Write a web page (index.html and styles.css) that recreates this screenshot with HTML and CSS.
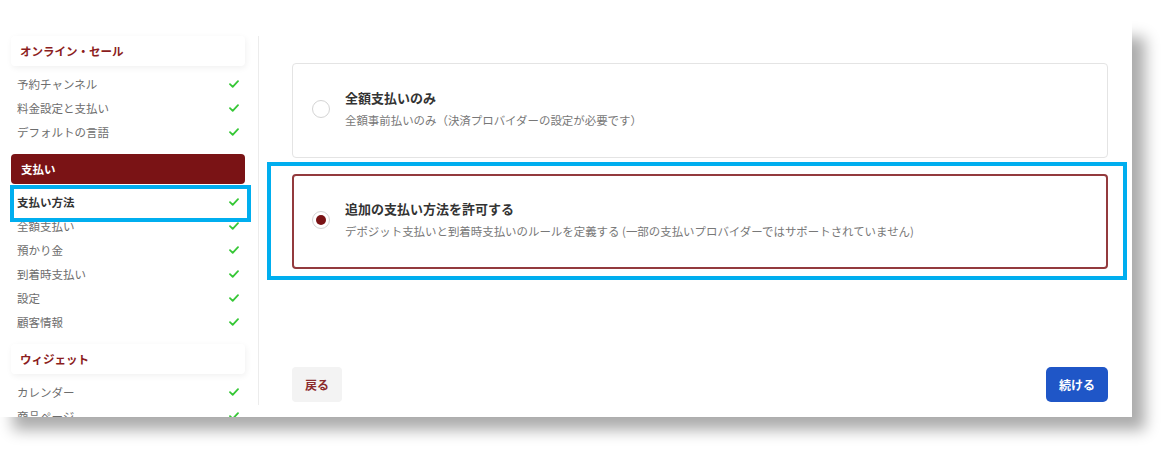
FILE: index.html
```html
<!DOCTYPE html>
<html lang="ja">
<head>
<meta charset="utf-8">
<title>支払い方法</title>
<link rel="stylesheet" href="styles.css">
</head>
<body>
<div class="frame">
  <div class="shadow"></div>
  <div class="shot">
    <aside class="sidebar">
      <div class="group">
        <div class="group-head">オンライン・セール</div>
        <div class="item"><span>予約チャンネル</span><svg class="check" viewBox="0 0 10 8"><path d="M1 4.2 3.7 6.8 9 1.2"/></svg></div>
        <div class="item"><span>料金設定と支払い</span><svg class="check" viewBox="0 0 10 8"><path d="M1 4.2 3.7 6.8 9 1.2"/></svg></div>
        <div class="item"><span>デフォルトの言語</span><svg class="check" viewBox="0 0 10 8"><path d="M1 4.2 3.7 6.8 9 1.2"/></svg></div>
      </div>
      <div class="group">
        <div class="group-head active">支払い</div>
        <div class="item current"><span>支払い方法</span><svg class="check" viewBox="0 0 10 8"><path d="M1 4.2 3.7 6.8 9 1.2"/></svg></div>
        <div class="item"><span>全額支払い</span><svg class="check" viewBox="0 0 10 8"><path d="M1 4.2 3.7 6.8 9 1.2"/></svg></div>
        <div class="item"><span>預かり金</span><svg class="check" viewBox="0 0 10 8"><path d="M1 4.2 3.7 6.8 9 1.2"/></svg></div>
        <div class="item"><span>到着時支払い</span><svg class="check" viewBox="0 0 10 8"><path d="M1 4.2 3.7 6.8 9 1.2"/></svg></div>
        <div class="item"><span>設定</span><svg class="check" viewBox="0 0 10 8"><path d="M1 4.2 3.7 6.8 9 1.2"/></svg></div>
        <div class="item"><span>顧客情報</span><svg class="check" viewBox="0 0 10 8"><path d="M1 4.2 3.7 6.8 9 1.2"/></svg></div>
      </div>
      <div class="group">
        <div class="group-head">ウィジェット</div>
        <div class="item"><span>カレンダー</span><svg class="check" viewBox="0 0 10 8"><path d="M1 4.2 3.7 6.8 9 1.2"/></svg></div>
        <div class="item"><span>商品ページ</span><svg class="check" viewBox="0 0 10 8"><path d="M1 4.2 3.7 6.8 9 1.2"/></svg></div>
      </div>
    </aside>
    <main class="main">
      <div class="options">
        <label class="option">
          <span class="radio"></span>
          <span class="option-text">
            <span class="option-title">全額支払いのみ</span>
            <span class="option-desc">全額事前払いのみ（決済プロバイダーの設定が必要です）</span>
          </span>
        </label>
        <label class="option selected">
          <span class="radio"></span>
          <span class="option-text">
            <span class="option-title">追加の支払い方法を許可する</span>
            <span class="option-desc">デポジット支払いと到着時支払いのルールを定義する (一部の支払いプロバイダーではサポートされていません)</span>
          </span>
        </label>
      </div>
      <div class="actions">
        <button class="btn btn-back">戻る</button>
        <button class="btn btn-next">続ける</button>
      </div>
    </main>
    <div class="mark mark-side"></div>
    <div class="mark mark-main"></div>
  </div>
</div>
</body>
</html>
```

FILE: styles.css
```css
* { box-sizing: border-box; }
html, body {
  margin: 0;
  padding: 0;
  background: #ffffff;
}
body {
  font-family: "Noto Sans CJK JP", "Noto Sans", sans-serif;
  width: 1168px;
  height: 472px;
  overflow: hidden;
}
.frame {
  position: relative;
  width: 1132px;
  height: 417px;
}
.shadow {
  position: absolute;
  top: 24px;
  left: 0;
  width: 1132px;
  height: 393px;
  box-shadow: 13px 13px 14px rgba(0, 0, 0, 0.33);
}
.shot {
  position: relative;
  display: flex;
  width: 1132px;
  height: 417px;
  background: #ffffff;
  overflow: hidden;
}

/* sidebar */
.sidebar {
  width: 259px;
  height: 369px;
  margin-top: 36px;
  border-right: 1px solid #ececec;
  display: flex;
  flex-direction: column;
  flex-shrink: 0;
}
.group + .group { margin-top: 10px; }
.group-head {
  height: 30px;
  margin: 0 13px 6px 11px;
  padding-left: 9px;
  display: flex;
  align-items: center;
  font-size: 11.5px;
  font-weight: 700;
  color: #8b1c20;
  background: #ffffff;
  border-radius: 4px;
  box-shadow: 1px 2px 6px rgba(0, 0, 0, 0.06);
}
.group-head.active {
  background: #7a1315;
  color: #ffffff;
  padding-left: 10px;
  box-shadow: none;
}
.item {
  height: 24px;
  display: flex;
  align-items: center;
  justify-content: space-between;
  padding: 0 19px 0 17px;
  font-size: 11.5px;
  color: #6d6d6d;
}
.item.current {
  font-weight: 700;
  color: #333333;
}
.check {
  width: 10px;
  height: 8px;
}
.check path {
  fill: none;
  stroke: #36c736;
  stroke-width: 1.8;
  stroke-linecap: round;
  stroke-linejoin: round;
}

/* main */
.main {
  flex: 1;
  display: flex;
  flex-direction: column;
  padding: 63px 24px 15px 33px;
}
.options {
  display: flex;
  flex-direction: column;
  gap: 16px;
}
.option {
  height: 95px;
  display: flex;
  align-items: center;
  padding: 0 19px 4px 19px;
  border: 1px solid #e4e4e4;
  border-radius: 4px;
  background: #ffffff;
}
.option.selected {
  border: 2px solid #933a3d;
  padding-left: 18px;
}
.radio {
  width: 18px;
  height: 18px;
  border-radius: 50%;
  border: 1.5px solid #d4d4d4;
  flex-shrink: 0;
  margin-right: 15px;
  display: flex;
  align-items: center;
  justify-content: center;
}
.option.selected .radio::after {
  content: "";
  width: 10px;
  height: 10px;
  border-radius: 50%;
  background: #7a1315;
}
.option-text {
  display: flex;
  flex-direction: column;
}
.option-title {
  font-size: 13px;
  line-height: 18px;
  font-weight: 700;
  color: #333333;
  margin-bottom: 5px;
}
.option-desc {
  font-size: 11.45px;
  line-height: 16px;
  color: #787878;
}
.actions {
  margin-top: auto;
  display: flex;
  justify-content: space-between;
}
.btn {
  height: 35px;
  border: none;
  border-radius: 4px;
  font-family: inherit;
  font-size: 12px;
  font-weight: 700;
  padding: 0;
  cursor: pointer;
}
.btn-back {
  width: 50px;
  background: #f3f3f3;
  color: #8b2b2e;
}
.btn-next {
  width: 62px;
  background: #1f56c7;
  color: #ffffff;
  border-radius: 5px;
}

/* annotation highlights */
.mark {
  position: absolute;
  border: 4px solid #00aeef;
  pointer-events: none;
}
.mark-side {
  left: 10px;
  top: 185px;
  width: 241px;
  height: 37px;
}
.mark-main {
  left: 267px;
  top: 162px;
  width: 860px;
  height: 118px;
}
```
